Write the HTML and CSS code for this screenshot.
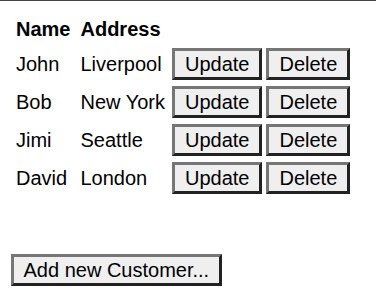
FILE: index.html
```html
<!DOCTYPE html>
<html>
<head>
<meta charset="utf-8">
<link rel="stylesheet" href="styles.css">
</head>
<body>
<div class="topline"></div>
<div class="page">
  <div class="grid">
    <div class="hd name">Name</div>
    <div class="hd addr">Address</div>
    <div class="hd"></div>
    <div class="cell name">John</div>
    <div class="cell addr">Liverpool</div>
    <div class="actions"><button class="btn">Update</button><button class="btn">Delete</button></div>
    <div class="cell name">Bob</div>
    <div class="cell addr">New York</div>
    <div class="actions"><button class="btn">Update</button><button class="btn">Delete</button></div>
    <div class="cell name">Jimi</div>
    <div class="cell addr">Seattle</div>
    <div class="actions"><button class="btn">Update</button><button class="btn">Delete</button></div>
    <div class="cell name">David</div>
    <div class="cell addr">London</div>
    <div class="actions"><button class="btn">Update</button><button class="btn">Delete</button></div>
  </div>
  <div class="footer"><button class="btn add">Add new Customer...</button></div>
</div>
</body>
</html>
```
FILE: styles.css
```css
html, body {
  margin: 0;
  padding: 0;
  background: #ffffff;
  font-family: "Liberation Sans", Arial, sans-serif;
  font-size: 20px;
  color: #000000;
}
.topline {
  height: 1px;
  background: #444444;
}
.page {
  padding: 15px 0 0 0;
}
.grid {
  display: grid;
  grid-template-columns: auto auto auto;
  grid-template-rows: 26px repeat(4, 32px);
  row-gap: 6px;
  column-gap: 0;
  justify-content: start;
  align-items: center;
  padding-left: 16px;
}
.hd {
  font-weight: bold;
  line-height: 23px;
}
.cell {
  line-height: 23px;
}
.name {
  padding-right: 10px;
}
.addr {
  padding-right: 7px;
}
.actions {
  display: flex;
  gap: 4px;
}
.btn {
  font-family: "Liberation Sans", Arial, sans-serif;
  font-size: 20px;
  color: #000000;
  background: #efefef;
  height: 32px;
  box-sizing: border-box;
  padding: 0 10px;
  margin: 0;
  line-height: 23px;
  border-width: 3px;
  border-style: solid;
  border-color: #767676 #222222 #222222 #767676;
}
.add {
  padding: 0 9.5px;
}
.footer {
  margin-top: 60px;
  padding-left: 11px;
}
```
